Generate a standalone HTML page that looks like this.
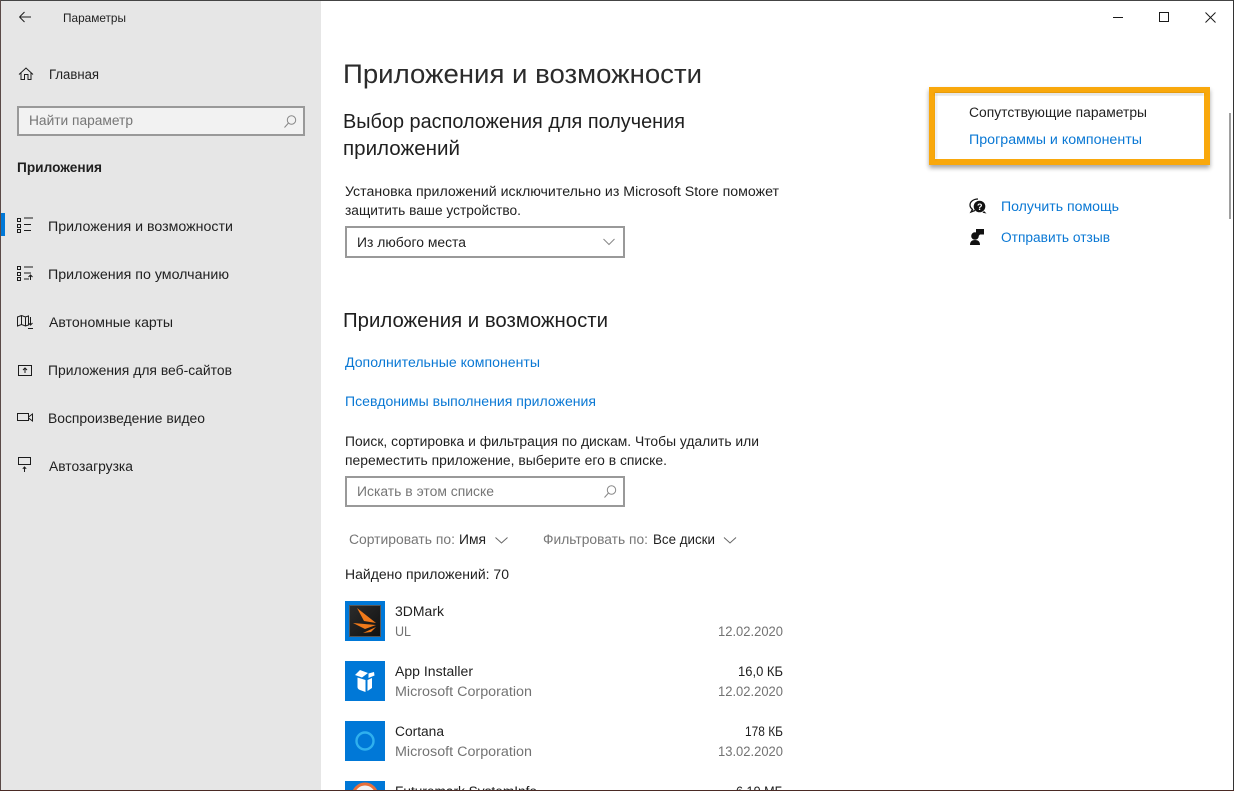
<!DOCTYPE html>
<html lang="ru"><head><meta charset="utf-8"><title>Параметры</title>
<style>
html,body{margin:0;padding:0;width:1234px;height:791px;overflow:hidden;background:#fff}
svg{display:block}
text{font-family:"Liberation Sans","DejaVu Sans",sans-serif;font-size:13.5px;fill:#1f1f1f}
.g{fill:#767676}.b{fill:#0a78d4}.p{fill:#737373}
.ic{fill:none;stroke:#1c1c1c;stroke-width:1}
</style></head><body>
<svg width="1234" height="791" viewBox="0 0 1234 791" xmlns="http://www.w3.org/2000/svg">
<defs><filter id="s" x="-10%" y="-20%" width="120%" height="140%"><feGaussianBlur stdDeviation="2.5"/></filter>
<filter id="t" x="-5%" y="-50%" width="110%" height="200%"><feGaussianBlur stdDeviation="1.5"/></filter>
<linearGradient id="dm" x1="0" y1="0" x2="1" y2="1"><stop offset="0" stop-color="#2c2c2c"/><stop offset="1" stop-color="#111"/></linearGradient></defs>
<rect width="1234" height="791" fill="#fff"/>
<rect x="1" y="1" width="320" height="789" fill="#e6e6e6"/>

<!-- title bar -->
<path class="ic" d="M19.5 17H31M19.5 17l5-5M19.5 17l5 5" stroke-width="1.1"/>
<text x="63" y="22" style="font-size:12px" textLength="63" lengthAdjust="spacingAndGlyphs">Параметры</text>
<path d="M1113 17.5h10" stroke="#1a1a1a" fill="none"/>
<rect x="1159.5" y="12.5" width="9" height="9" fill="none" stroke="#1a1a1a"/>
<path d="M1205.5 12.5l10 10M1215.5 12.5l-10 10" stroke="#1a1a1a" fill="none"/>

<!-- nav -->
<path class="ic" d="M19 74.5L26 68l7 6.5M21 73v6.5h3.5v-5h3.500v5H31V73"/>
<text x="49" y="79" textLength="50" lengthAdjust="spacingAndGlyphs">Главная</text>
<rect x="18" y="107" width="286" height="28" fill="#f2f2f2" stroke="#999" stroke-width="2"/>
<text class="g" x="29" y="125" textLength="104" lengthAdjust="spacingAndGlyphs">Найти параметр</text>
<circle cx="291.500" cy="120" r="4.200" fill="none" stroke="#888"/><path d="M288.500 123l-4 4.500" stroke="#888" fill="none"/>
<text x="17" y="172" textLength="85" lengthAdjust="spacingAndGlyphs" style="font-weight:700">Приложения</text>

<rect x="1" y="213" width="4" height="23" fill="#0078d7"/>
<path class="ic" d="M17.500 218.500h3v3h-3zM17.500 224.500h3v3h-3zM17.500 229.500h3v3h-3zM24 218h9M24 224.500h7M24 230.500h7"/>
<text x="48" y="231" textLength="185" lengthAdjust="spacingAndGlyphs">Приложения и возможности</text>

<path class="ic" d="M17.500 266.500h3v3h-3zM17.500 272.500h3v3h-3zM17.500 277.500h3v3h-3zM24 267h9M24 273h7M24 279h5M30.500 280v-5M28.500 277l2-2 2 2"/>
<text x="48" y="279" textLength="181" lengthAdjust="spacingAndGlyphs">Приложения по умолчанию</text>

<path class="ic" d="M17.500 317l4 -1.500 4 1.500 3 -1v9l-3 1 -4-1.500 -4 1.500zM21.500 315.500v9M25.500 317v9M30.500 317v8M28.500 323l2 2 2-2M28 328.500h5"/>
<text x="49" y="327" textLength="124" lengthAdjust="spacingAndGlyphs">Автономные карты</text>

<path class="ic" d="M18.500 365.500h13v10h-13zM25 373v-5M23 370l2-2 2 2"/>
<text x="48" y="375" textLength="184" lengthAdjust="spacingAndGlyphs">Приложения для веб-сайтов</text>

<path class="ic" d="M17.500 413.500h11v7h-11zM28.500 417l4-3v7l-4-3"/>
<text x="48" y="423" textLength="157" lengthAdjust="spacingAndGlyphs">Воспроизведение видео</text>

<path class="ic" d="M18.500 457.500h12v7h-12zM24.500 472v-5M22.800 468.800l1.700-1.800 1.700 1.800"/>
<text x="49" y="471" textLength="84" lengthAdjust="spacingAndGlyphs">Автозагрузка</text>

<!-- main column -->
<text x="343" y="83" style="font-size:26.500px;fill:#2b2b2b" textLength="359" lengthAdjust="spacingAndGlyphs">Приложения и возможности</text>
<text x="343" y="128" style="font-size:20px" textLength="342" lengthAdjust="spacingAndGlyphs">Выбор расположения для получения</text>
<text x="343" y="155" style="font-size:20px" textLength="117" lengthAdjust="spacingAndGlyphs">приложений</text>
<text x="345" y="196" textLength="434" lengthAdjust="spacingAndGlyphs">Установка приложений исключительно из Microsoft Store поможет</text>
<text x="345" y="215" textLength="176" lengthAdjust="spacingAndGlyphs">защитить ваше устройство.</text>
<rect x="346" y="227" width="278" height="30" fill="#fff" stroke="#999" stroke-width="2"/>
<text x="357" y="247" textLength="109" lengthAdjust="spacingAndGlyphs">Из любого места</text>
<path d="M603.500 239l5.500 5.500 5.500-5.500" fill="none" stroke="#888"/>

<text x="343" y="327" style="font-size:20px" textLength="265" lengthAdjust="spacingAndGlyphs">Приложения и возможности</text>
<text class="b" x="345" y="367" textLength="195" lengthAdjust="spacingAndGlyphs">Дополнительные компоненты</text>
<text class="b" x="345" y="406" textLength="251" lengthAdjust="spacingAndGlyphs">Псевдонимы выполнения приложения</text>
<text x="345" y="446" textLength="414" lengthAdjust="spacingAndGlyphs">Поиск, сортировка и фильтрация по дискам. Чтобы удалить или</text>
<text x="345" y="465" textLength="322" lengthAdjust="spacingAndGlyphs">переместить приложение, выберите его в списке.</text>
<rect x="346" y="477" width="278" height="29" fill="#fff" stroke="#999" stroke-width="2"/>
<text class="g" x="357" y="496" textLength="137" lengthAdjust="spacingAndGlyphs">Искать в этом списке</text>
<circle cx="611.500" cy="490" r="4.200" fill="none" stroke="#888"/><path d="M608.500 493l-4 4.500" stroke="#888" fill="none"/>

<text class="g" x="349" y="544" textLength="106" lengthAdjust="spacingAndGlyphs">Сортировать по:</text>
<text x="459" y="544" textLength="27" lengthAdjust="spacingAndGlyphs">Имя</text>
<path d="M495.500 537.500l6 5.500 6-5.500" fill="none" stroke="#666"/>
<text class="g" x="543" y="544" textLength="105" lengthAdjust="spacingAndGlyphs">Фильтровать по:</text>
<text x="653" y="544" textLength="62" lengthAdjust="spacingAndGlyphs">Все диски</text>
<path d="M724 537.500l6 5.500 6-5.500" fill="none" stroke="#666"/>
<text x="345" y="579" textLength="164" lengthAdjust="spacingAndGlyphs">Найдено приложений: 70</text>

<!-- apps -->
<rect x="345" y="601" width="40" height="40" fill="#0078d7"/>
<rect x="349.500" y="605.500" width="31" height="31" fill="url(#dm)" stroke="#555"/>
<path d="M357 608L376 623L364 621ZM353 623L376 625L365 629ZM363 633L376 627L371 632Z" fill="#f0791a"/>

<text x="395" y="616" textLength="49" lengthAdjust="spacingAndGlyphs">3DMark</text>
<text class="p" x="395" y="636" textLength="16" lengthAdjust="spacingAndGlyphs">UL</text>
<text class="p" x="718" y="636" textLength="65" lengthAdjust="spacingAndGlyphs">12.02.2020</text>

<rect x="345" y="661" width="40" height="40" fill="#0078d7"/>
<path d="M357.500 677.500L365.500 680V692L360 690Q357.500 689 357.500 687ZM367.500 680L372 678V688L367.500 691ZM355 675L360 670L368 673L362 677.500ZM368.500 673.500L374 672L374.500 675.500L368.500 678Z" fill="#fff"/>
<text x="395" y="676" textLength="78" lengthAdjust="spacingAndGlyphs">App Installer</text>
<text class="p" x="395" y="696" textLength="137" lengthAdjust="spacingAndGlyphs">Microsoft Corporation</text>
<text x="738" y="676" textLength="45" lengthAdjust="spacingAndGlyphs">16,0 КБ</text>
<text class="p" x="718" y="696" textLength="65" lengthAdjust="spacingAndGlyphs">12.02.2020</text>

<rect x="345" y="721" width="40" height="40" fill="#0078d7"/>
<circle cx="365" cy="741" r="8.500" fill="none" stroke="#2fb0ee" stroke-width="2.400"/>
<text x="395" y="736" textLength="49" lengthAdjust="spacingAndGlyphs">Cortana</text>
<text class="p" x="395" y="756" textLength="137" lengthAdjust="spacingAndGlyphs">Microsoft Corporation</text>
<text x="745" y="736" textLength="38" lengthAdjust="spacingAndGlyphs">178 КБ</text>
<text class="p" x="718" y="756" textLength="65" lengthAdjust="spacingAndGlyphs">13.02.2020</text>

<rect x="345" y="781" width="40" height="10" fill="#0078d7"/>
<circle cx="365" cy="796" r="12" fill="#f3f3f3" stroke="#e8703a" stroke-width="3"/>
<text x="395" y="796" textLength="142" lengthAdjust="spacingAndGlyphs">Futuremark SystemInfo</text>
<text x="736" y="796" textLength="47" lengthAdjust="spacingAndGlyphs">6,19 МБ</text>

<!-- scrollbar -->
<rect x="1229" y="113" width="2" height="106" fill="#a0a0a0"/>

<!-- highlight -->
<rect x="929" y="90" width="281" height="78" fill="#000" opacity=".35" filter="url(#s)"/>
<rect x="932" y="90" width="275" height="72" fill="#fff" stroke="#f9a80c" stroke-width="6"/>
<rect x="935" y="93" width="269" height="2" fill="#000" opacity=".22" filter="url(#t)"/>
<rect x="935" y="93" width="2" height="66" fill="#000" opacity=".14" filter="url(#t)"/>
<text x="969" y="117" textLength="178" lengthAdjust="spacingAndGlyphs">Сопутствующие параметры</text>
<text class="b" x="969" y="144" textLength="173" lengthAdjust="spacingAndGlyphs">Программы и компоненты</text>

<!-- help -->
<path d="M978 199c-4.500 0-8 2.700-8 6 0 1.800 1 3.300 2.500 4.400l-1.500 2.600 4-1.500" fill="none" stroke="#111" stroke-width="1.300"/>
<circle cx="979.500" cy="206.500" r="5.800" fill="#111"/><path d="M984 211l2.500 2.500-4-.8z" fill="#111"/>
<text x="977" y="210" style="font-size:9px;font-weight:700;fill:#fff">?</text>
<text class="b" x="1001" y="211" textLength="118" lengthAdjust="spacingAndGlyphs">Получить помощь</text>
<circle cx="975" cy="236" r="3.800" fill="#111"/>
<path d="M970 245c0-3.600 2-5 5-5s5 1.400 5 5z" fill="#111"/>
<path d="M976 229h8v5.500h-4l-2 2v-2h-2z" fill="#111"/>
<text class="b" x="1001" y="242" textLength="109" lengthAdjust="spacingAndGlyphs">Отправить отзыв</text>

<!-- window frame -->
<rect x="0" y="0" width="1234" height="1" fill="#444"/>
<rect x="0" y="0" width="1" height="791" fill="#5a4a48"/>
<rect x="1233" y="0" width="1" height="791" fill="#333"/>
<rect x="0" y="790" width="1234" height="1" fill="#4a2a24"/>
</svg>
</body></html>
